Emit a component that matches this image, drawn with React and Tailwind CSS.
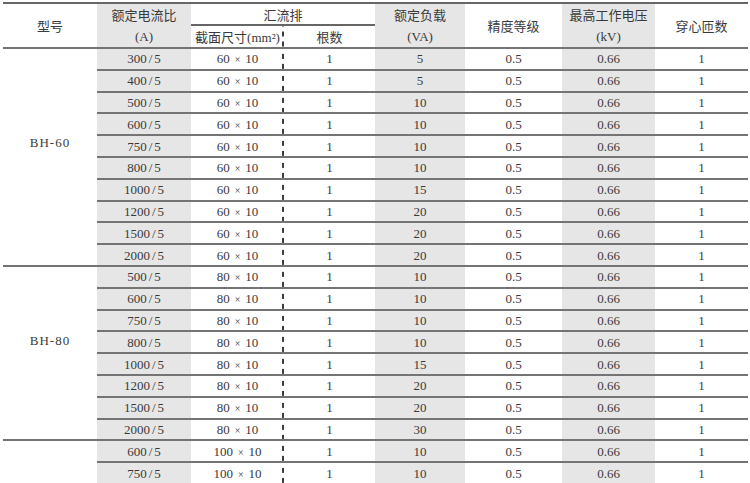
import React from "react";

const groups = [
  {
    label: "BH-60",
    pt: "pt-[87px]",
    size: "60 × 10",
    rows: [
      ["300/5", "5"],
      ["400/5", "5"],
      ["500/5", "10"],
      ["600/5", "10"],
      ["750/5", "10"],
      ["800/5", "10"],
      ["1000/5", "15"],
      ["1200/5", "20"],
      ["1500/5", "20"],
      ["2000/5", "20"],
    ],
  },
  {
    label: "BH-80",
    pt: "pt-[67px]",
    size: "80 × 10",
    rows: [
      ["500/5", "10"],
      ["600/5", "10"],
      ["750/5", "10"],
      ["800/5", "10"],
      ["1000/5", "15"],
      ["1200/5", "20"],
      ["1500/5", "20"],
      ["2000/5", "30"],
    ],
  },
  {
    label: "",
    pt: "pt-0",
    size: "100 × 10",
    rows: [
      ["600/5", "10"],
      ["750/5", "10"],
    ],
  },
];

const line = "border-b-2 border-[#747474]";
const shade = "bg-[#e6e6e6]";
const dash =
  "bg-[linear-gradient(to_bottom,#3c3c3c_55%,transparent_55%)] bg-[length:2px_10px] bg-repeat-y bg-right";
const cjk = { fontFamily: '"Noto Sans CJK SC", sans-serif' };

function Size({ s }) {
  const [a, b] = s.split(" × ");
  return (
    <span>
      {a}
      <span className="mx-[5px] text-[10px]">×</span>
      {b}
    </span>
  );
}

function Ratio({ s }) {
  const [a, b] = s.split("/");
  return (
    <span>
      {a}
      <span className="mx-[2px]">/</span>
      {b}
    </span>
  );
}

export default function App() {
  return (
    <div className="w-[750px] h-[483px] overflow-hidden bg-white pt-[2px] pl-[3px]">
      <table
        className="table-fixed border-collapse w-[745px] text-[13px] text-[#3a3a3a] text-center leading-none"
        style={{ fontFamily: '"Liberation Serif", "Noto Sans CJK SC", serif' }}
      >
        <colgroup>
          <col className="w-[94px]" />
          <col className="w-[94px]" />
          <col className="w-[93px]" />
          <col className="w-[91px]" />
          <col className="w-[90px]" />
          <col className="w-[97px]" />
          <col className="w-[93px]" />
          <col className="w-[93px]" />
        </colgroup>
        <thead>
          <tr className="h-[22px] border-t-2 border-[#666666]">
            <td rowSpan={2} className={line} style={cjk}>
              型号
            </td>
            <td className={shade} style={cjk}>额定电流比</td>
            <td colSpan={2} className="border-b-2 border-[#666666]" style={cjk}>
              汇流排
            </td>
            <td className={shade} style={cjk}>额定负载</td>
            <td rowSpan={2} className={line} style={cjk}>
              精度等级
            </td>
            <td className={shade} style={cjk}>最高工作电压</td>
            <td rowSpan={2} className={line} style={cjk}>
              穿心匝数
            </td>
          </tr>
          <tr className="h-[23px]">
            <td className={`${shade} ${line}`}>(A)</td>
            <td className={`${line} ${dash}`}>
              <span style={cjk}>截面尺寸</span>(mm²)
            </td>
            <td className={line} style={cjk}>根数</td>
            <td className={`${shade} ${line}`}>(VA)</td>
            <td className={`${shade} ${line}`}>(kV)</td>
          </tr>
        </thead>
        <tbody>
          {groups.map((g, gi) =>
            g.rows.map((r, ri) => (
              <tr key={`${gi}-${ri}`} className="h-[21.8px]">
                {ri === 0 && (
                  <td rowSpan={g.rows.length} className={`${line} align-top ${g.pt} tracking-[1px]`}>
                    {g.label}
                  </td>
                )}
                <td className={`${shade} ${line}`}>
                  <Ratio s={r[0]} />
                </td>
                <td className={`${line} ${dash}`}>
                  <Size s={g.size} />
                </td>
                <td className={line}>1</td>
                <td className={`${shade} ${line}`}>{r[1]}</td>
                <td className={line}>0.5</td>
                <td className={`${shade} ${line}`}>0.66</td>
                <td className={line}>1</td>
              </tr>
            ))
          )}
        </tbody>
      </table>
    </div>
  );
}
